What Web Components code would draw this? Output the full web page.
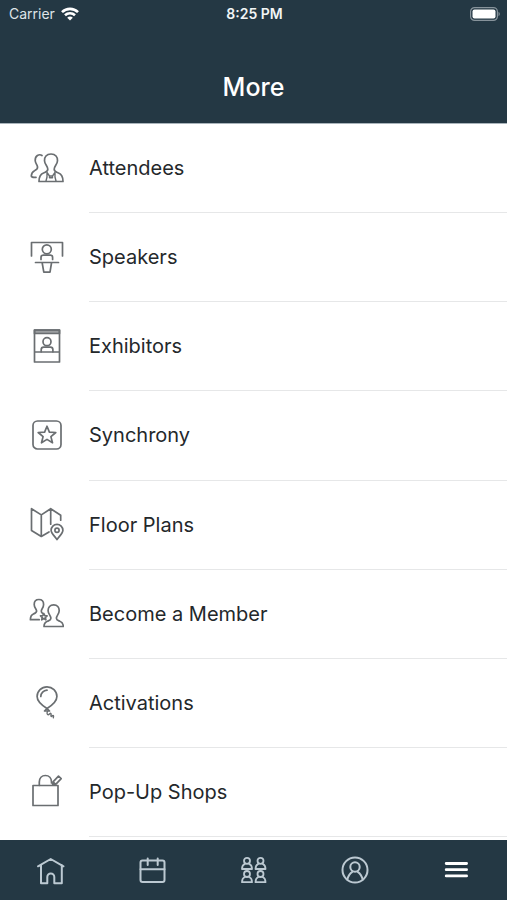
<!DOCTYPE html>
<html lang="en">
<head>
<meta charset="utf-8">
<meta name="viewport" content="width=device-width, initial-scale=1">
<title>More</title>
<style>
  html, body { height: 100%; }
  body {
    margin: 0;
    background: #fff;
    font-family: Inter, "Liberation Sans", sans-serif;
    --bar: #243844;
    --ink: #24282b;
    --icon: #6a6e71;
    --rule: #e6e7e8;
    --tab: #bcc9d2;
  }
</style>
</head>
<body>
<more-screen></more-screen>

<template id="status-bar">
  <style>
    :host { display: grid; grid-template-columns: 1fr auto 1fr; align-items: center; height: 28px; padding: 0 7px 0 9px; color: #fff; font-size: 14px; line-height: 20px; }
    .left { display: flex; align-items: center; gap: 6px; color: #dfe4e8; }
    .time { font-weight: 600; color: #f2f5f6; }
    .right { display: flex; justify-content: flex-end; }
    svg { display: block; }
  </style>
  <div class="left">
    <span>Carrier</span>
    <svg width="18" height="14" viewBox="0 0 18 14" fill="none" stroke="#fff" stroke-width="2.6" aria-label="Wi-Fi">
      <path d="M1 5.200C5.500.700 12.500.700 17 5.200"/>
      <path d="M4 8.300c2.800-2.700 7.200-2.700 10 0"/>
      <path d="M9 13.500 6.200 10.700c1.600-1.500 4-1.500 5.600 0Z" fill="#fff" stroke="none"/>
    </svg>
  </div>
  <span class="time">8:25 PM</span>
  <div class="right">
    <svg width="30" height="14" viewBox="0 0 30 14" aria-label="Battery full">
      <rect x=".6" y=".6" width="26.800" height="12.800" rx="4" fill="none" stroke="#87939b" stroke-width="1.200"/>
      <rect x="2.500" y="2.500" width="23" height="9" rx="2" fill="#fff"/>
      <path d="M28.500 4.800c1.700.8 1.700 3.600 0 4.400Z" fill="#87939b"/>
    </svg>
  </div>
</template>

<template id="page-header">
  <style>
    :host { display: block; flex: none; background: var(--bar); color: #fff; border-bottom: 1px solid #a9b4bb; }
    h1 { margin: 0; padding: 43px 16px 20px; font-size: 25px; line-height: 32px; font-weight: 500; text-align: center; }
  </style>
  <status-bar></status-bar>
  <h1><slot></slot></h1>
</template>

<template id="menu-item">
  <style>
    :host { display: flex; flex: 1 0 auto; min-height: 84px; }
    a { flex: 1; display: flex; align-items: stretch; padding-left: 28px; gap: 25px; color: var(--ink); text-decoration: none; font-size: 20px; line-height: 28px; }
    .icon { display: flex; align-items: center; width: 36px; padding-bottom: 2px; color: var(--icon); }
    .label { flex: 1; display: flex; align-items: center; border-bottom: 1px solid var(--rule); }
    ::slotted(svg) { display: block; width: 36px; height: 36px; fill: none; stroke: currentColor; stroke-width: 1.700px; stroke-linejoin: round; stroke-linecap: round; }
  </style>
  <a href="#"><span class="icon"><slot name="icon"></slot></span><span class="label"><slot></slot></span></a>
</template>

<template id="tab-item">
  <style>
    :host { display: flex; flex: 1; }
    a { flex: 1; display: flex; align-items: center; justify-content: center; color: var(--tab); }
    :host([active]) a { color: #fff; }
    ::slotted(svg) { display: block; width: 30px; height: 30px; fill: none; stroke: currentColor; stroke-width: 2px; stroke-linejoin: round; stroke-linecap: round; }
  </style>
  <a href="#"><slot></slot></a>
</template>

<template id="tab-bar">
  <style>
    :host { display: block; flex: none; background: var(--bar); }
    nav { display: flex; height: 60px; }
  </style>
  <nav aria-label="Sections"><slot></slot></nav>
</template>

<template id="more-screen">
  <style>
    :host { display: flex; flex-direction: column; height: 100vh; }
    main { flex: 1; min-height: 0; overflow: hidden; display: flex; flex-direction: column; padding-bottom: 3px; }
  </style>
  <page-header>More</page-header>
  <main>
    <menu-item>
      <svg slot="icon" viewBox="0 0 36 36">
        <path d="M14 5.500C11 3.500 7 6 7.200 10.500c0 2.500 1.800 4 2.300 6.200.5 2.400-1 3-3 4-2.300 1-3 2.300-3.200 5.300.3 1.200 1.500 1.700 4.700 1.300"/>
        <path d="M23 4c-4.600 0-6.700 3-6.500 6.700.2 3.800 3.300 5.300 3.300 8.600 0 2.500-2 2.700-4.300 3.700C12 24.300 11 27 11 31.500h24c0-4.500-1-7.200-4.500-8.500-2.300-1-4.300-1.200-4.300-3.700 0-3.300 3.100-4.800 3.300-8.600C29.700 7 27.600 4 23 4Z"/>
        <path d="m19 22.500 2.500 3.500h3l2.500-3.500M19 22.500v4.500l-1 4M27 22.500v4.500l1 4M21.500 26v1.800h3V26" stroke-width="1.400"/>
      </svg>Attendees</menu-item>
    <menu-item>
      <svg slot="icon" viewBox="0 0 36 36">
        <path d="M3.500 17V3.500h31V17"/><circle cx="18.800" cy="10.300" r="4.500"/>
        <path d="M13 20.500v-2c0-1.500.8-2.300 2.300-2.300h7c1.500 0 2.300.8 2.300 2.300v2M7.500 23.500h23M14.200 24l1.600 9.200h6.200L23.500 24"/>
      </svg>Speakers</menu-item>
    <menu-item>
      <svg slot="icon" viewBox="0 0 36 36">
        <path d="M6.500 2h25v3.500h-25Z" fill="#9b9ea0"/>
        <path d="M6.500 2h25v32h-25ZM6.500 24h25"/><circle cx="19" cy="13.700" r="4"/>
        <path d="M13.200 23.800v-2c0-1.600.8-2.600 2.500-2.600h6.700c1.700 0 2.500 1 2.500 2.600v2"/>
      </svg>Exhibitors</menu-item>
    <menu-item>
      <svg slot="icon" viewBox="0 0 36 36">
        <rect x="5" y="4" width="28" height="28" rx="4.500"/>
        <path d="m19 9.200 2.400 5.900 6.400.4-4.900 4.100 1.600 6.200-5.500-3.400-5.500 3.400 1.600-6.200-4.900-4.100 6.400-.4Z"/>
      </svg>Synchrony</menu-item>
    <menu-item>
      <svg slot="icon" viewBox="0 0 36 36">
        <path d="M21 25.900 13.300 30.500 3.500 24.500V2.700l9.800 6.200 9.400-6.200 10 6.500v5M13.300 8.900v21.600M22.700 2.700V18.200"/>
        <path d="M29 33.500c-2-3.200-5.900-6-5.900-9.300a5.900 5.900 0 0 1 11.800 0c0 3.300-3.900 6.100-5.900 9.300Z"/><circle cx="29" cy="24.200" r="2.100"/>
      </svg>Floor Plans</menu-item>
    <menu-item>
      <svg slot="icon" viewBox="0 0 36 36">
        <path d="M11.200 24.700H2.400c0-3 .5-4.700 3-5.700 2-.8 3.200-1.200 3.200-3 0-2.200-2.400-3.200-2.400-6.500 0-3 1.700-5 4.700-5s4.700 2 4.700 5c0 3.300-2.300 4.300-2.300 6.500 0 1.200.4 1.800 1.200 2.300"/>
        <path d="M25.700 9.800c-3.600 0-5.700 2.400-5.600 6 .1 3.300 2.800 4.700 2.800 7.500 0 2-1.700 2.200-3.500 3-2.500 1-3.400 2.200-3.400 5.200h19.300c0-3-.9-4.200-3.400-5.200-1.800-.8-3.500-1-3.500-3 0-2.800 2.700-4.200 2.800-7.500.1-3.600-2-6-5.500-6Z"/>
        <path d="m15.800 18.500 1 2.200 2.300.2-1.800 1.600.6 2.300-2.100-1.300-2.100 1.300.6-2.300-1.800-1.600 2.300-.2Z"/>
      </svg>Become a Member</menu-item>
    <menu-item>
      <svg slot="icon" viewBox="0 0 36 36">
        <path d="M19 24.500c-4-2.500-9.900-6.500-9.900-12a9.900 9.700 0 0 1 19.800 0c0 5.500-5.900 9.500-9.900 12ZM12.800 12.500c0-3.400 2.800-6 6.200-6.300"/>
        <path d="m19 24.500-2.500 2.500h5Z"/><path d="M19.500 27.500c-1.500 2.500.5 4 2 2.500 1.300-1.300 2-.5 1.500 1-.5 1.800.5 1.800 1.300.8 1-1 1.600-.2 1 2" stroke-width="1.400"/>
      </svg>Activations</menu-item>
    <menu-item>
      <svg slot="icon" viewBox="0 0 36 36">
        <path d="M5 12.500h25v20H5Z"/><path d="M11.300 12.300V9c0-4 2.500-6.500 6.100-6.500s6.100 2.500 6.100 6.500v1"/>
        <path d="m25 8.800 5.500-5.700 2.700 2.500-5.500 5.800ZM25 8.800l-.3 2.700 3-.1"/>
      </svg>Pop-Up Shops</menu-item>
  </main>
  <tab-bar>
    <tab-item><svg viewBox="0 0 30 30" role="img" aria-label="Home">
      <path d="M2 11.300 14.700 4 27.500 11.300M5 10v18.200h6.300V22a3.500 3.500 0 0 1 7 0v6.200H25.800V10"/></svg></tab-item>
    <tab-item><svg viewBox="0 0 30 30" role="img" aria-label="Calendar">
      <rect x="3.500" y="5.500" width="24" height="21.500" rx="2"/><path d="M3.500 14.300h24M10.700 3.500V10M20.700 3.500V10"/></svg></tab-item>
    <tab-item><svg viewBox="0 0 30 30" role="img" aria-label="Groups">
      <g stroke-width="1.800">
      <circle cx="8" cy="5.800" r="3"/><path d="M5.800 8.800C3.500 9.800 3 11.500 3 14h10c0-2.500-.5-4.200-2.800-5.200"/>
      <circle cx="21.500" cy="5.800" r="3"/><path d="M19.300 8.800c-2.300 1-2.800 2.700-2.800 5.200h10c0-2.500-.5-4.200-2.800-5.200"/>
      <circle cx="8" cy="19" r="3"/><path d="M5.800 22C3.500 23 3 24.700 3 27.200h10c0-2.500-.5-4.200-2.800-5.200"/>
      <circle cx="21.500" cy="19" r="3"/><path d="M19.300 22c-2.300 1-2.800 2.700-2.800 5.200h10c0-2.500-.5-4.200-2.800-5.200"/>
      </g></svg></tab-item>
    <tab-item><svg viewBox="0 0 30 30" role="img" aria-label="Profile">
      <circle cx="15" cy="15" r="12.500"/><circle cx="15" cy="12" r="4.700"/><path d="M7.300 24.800c.8-3.800 2.200-6.300 5-8M22.700 24.800c-.8-3.800-2.200-6.300-5-8"/></svg></tab-item>
    <tab-item active><svg viewBox="0 0 30 30" role="img" aria-label="More">
      <path d="M5.200 8.500h20.400M5.200 14.700h20.400M5.200 20.900h20.400" stroke-width="2.800"/></svg></tab-item>
  </tab-bar>
</template>

<script>
  for (const name of ["status-bar", "page-header", "menu-item", "tab-item", "tab-bar", "more-screen"]) {
    customElements.define(name, class extends HTMLElement {
      constructor() {
        super();
        this.attachShadow({ mode: "open" })
          .append(document.getElementById(name).content.cloneNode(true));
      }
    });
  }
</script>
</body>
</html>
